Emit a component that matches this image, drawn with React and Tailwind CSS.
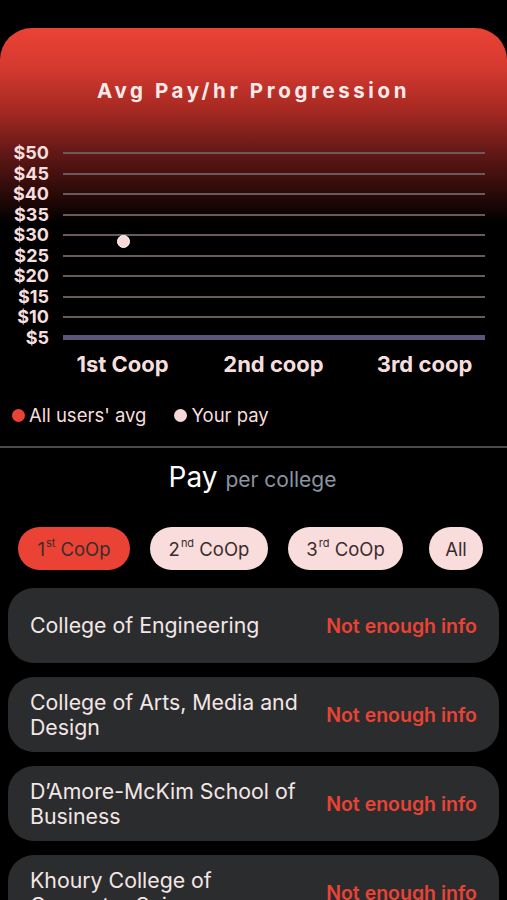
import React from "react";

const ticks = ["$50", "$45", "$40", "$35", "$30", "$25", "$20", "$15", "$10", "$5"];

const colleges = [
  "College of Engineering",
  "College of Arts, Media and Design",
  "D\u2019Amore-McKim School of Business",
  "Khoury College of Computer Sciences",
];

export default function App() {
  return (
    <div
      className="w-[507px] h-[900px] overflow-hidden bg-black text-white"
      style={{ fontFamily: "Inter, 'Liberation Sans', sans-serif" }}
    >
      <div className="pt-[28px]">
        <div className="rounded-t-[32px] bg-[linear-gradient(180deg,#ea4335_0px,#d5392f_40px,#a22821_85px,#611816_125px,#2a0a09_165px,#000000_195px)] pt-[49px]">
          <h1 className="text-center text-[20.5px] leading-[28px] font-bold tracking-[3.6px] text-[#fbeaea]">
            Avg Pay/hr Progression
          </h1>
          <div className="relative mt-[38px]">
            {ticks.map((t, i) => (
              <div key={t} className="flex items-center h-[20.5px]">
                <div className="w-[49px] text-right text-[18px] leading-[20px] font-bold text-[#f6dede]">
                  {t}
                </div>
                <div
                  className={
                    i === ticks.length - 1
                      ? "ml-[14px] mr-[22px] flex-1 h-[5px] bg-[#5b5577]"
                      : "ml-[14px] mr-[22px] flex-1 h-[2px] bg-[#6a5b5b]"
                  }
                />
              </div>
            ))}
            <div className="absolute left-[117px] top-[92px] w-[13px] h-[13px] rounded-full bg-[#f8d9d9] border border-white" />
          </div>
          <div className="grid grid-cols-3 w-[453px] ml-[47px] mt-[1px] text-[22px] leading-[30px] font-bold text-[#f6dede] text-center">
            <div>1st Coop</div>
            <div>2nd coop</div>
            <div>3rd coop</div>
          </div>
          <div className="flex items-center mt-[24px] ml-[12px] text-[18.5px] leading-[24px] text-[#f6dede]">
            <span className="w-[13px] h-[13px] rounded-full bg-[#ea4335]" />
            <span className="ml-[4px]">All users&apos; avg</span>
            <span className="ml-[28px] w-[13px] h-[13px] rounded-full bg-[#f8d9d9]" />
            <span className="ml-[4px]">Your pay</span>
          </div>
        </div>
      </div>
      <div className="mt-[19px] h-[2px] bg-[#4a4a4a]" />
      <div className="flex items-baseline justify-center mt-[11px] mr-[2px]">
        <span className="text-[28px] leading-[36px] text-white">Pay</span>
        <span className="ml-[8px] text-[21px] leading-[28px] text-[#8b94a3]">per college</span>
      </div>
      <div className="flex items-center mt-[32px] px-[18px] gap-[20px] text-[18.5px] leading-[24px] text-[#3b2c2c]">
        <div className="flex items-center justify-center h-[43px] w-[112px] rounded-full bg-[#ea4335]">
          1<sup className="text-[11px] ml-[1px]">st</sup>&nbsp;CoOp
        </div>
        <div className="flex items-center justify-center h-[43px] w-[118px] rounded-full bg-[#f9dcdc]">
          2<sup className="text-[11px] ml-[1px]">nd</sup>&nbsp;CoOp
        </div>
        <div className="flex items-center justify-center h-[43px] w-[115px] rounded-full bg-[#f9dcdc]">
          3<sup className="text-[11px] ml-[1px]">rd</sup>&nbsp;CoOp
        </div>
        <div className="ml-[6px] flex items-center justify-center h-[43px] w-[54px] rounded-full bg-[#f9dcdc]">
          All
        </div>
      </div>
      <div className="mt-[18px] px-[8px] flex flex-col gap-[14px]">
        {colleges.map((c) => (
          <div
            key={c}
            className="flex items-center min-h-[75px] rounded-[26px] bg-[#2b2c2e] pl-[22px] pr-[22px] py-[12px]"
          >
            <div className="w-[280px] text-[21.3px] leading-[25px] text-[#f3e6e6]">{c}</div>
            <div className="ml-auto text-[19.5px] leading-[24px] font-semibold text-[#ea4335]">
              Not enough info
            </div>
          </div>
        ))}
      </div>
    </div>
  );
}
